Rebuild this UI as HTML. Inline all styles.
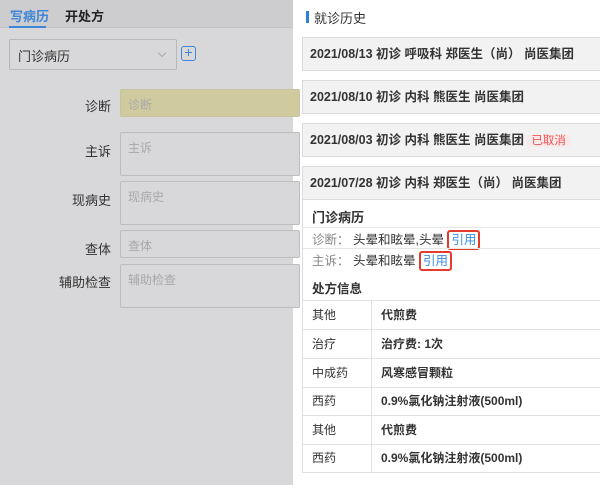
<!DOCTYPE html>
<html><head><meta charset="utf-8"><style>
*{margin:0;padding:0;box-sizing:border-box}
body{width:600px;height:485px;overflow:hidden;font-family:"Liberation Sans","Noto Sans CJK SC",sans-serif;background:#fff;position:relative}
.a{position:absolute}
#left{left:0;top:0;width:293px;height:485px;background:#d8d8da}
#tabs{left:0;top:0;width:293px;height:28px;background:#cdcdcf;border-bottom:1px solid #c4c4c6}
.lab{position:absolute;font-size:13px;color:#333;text-align:right;width:100px;left:11px}
.inp{position:absolute;left:120px;width:180px;border:1px solid #bdbdbf;border-radius:2px;background:#d8d8da;font-size:12px;color:#a8a8aa;padding:6px 0 0 7px}
.card{position:absolute;left:302px;width:300px;border:1px solid #dcdcdc;background:#f2f2f2;font-size:12.5px;font-weight:bold;color:#333;padding-left:7px;line-height:33px}
.row{position:absolute;left:303px;width:297px;font-size:12.5px;color:#333}
.tr{position:absolute;left:302px;width:300px;height:29px;border:1px solid #e2e2e2;border-top:none;font-size:12px;color:#333;line-height:28px}
.tr span{position:absolute;left:0;width:69px;padding-left:9px;border-right:1px solid #e2e2e2;height:28px}
.tr b{position:absolute;left:78px}
.q{color:#3a8ee6;border:2px solid #e53b2c;border-radius:3px;padding:0 2px;line-height:16px;display:inline-block}
</style></head><body>
<div id="left" class="a"></div>
<div id="tabs" class="a"></div>
<div class="a" style="left:10px;top:6px;font-size:13px;color:#3f85d8;font-weight:bold">写病历</div>
<div class="a" style="left:9px;top:26px;width:37px;height:2px;background:#3f85d8"></div>
<div class="a" style="left:65px;top:6px;font-size:13px;color:#222;font-weight:bold">开处方</div>
<div class="a" style="left:9px;top:39px;width:168px;height:31px;border:1px solid #b8b8ba;border-radius:2px;font-size:13px;color:#333;padding:6px 0 0 8px">门诊病历</div>
<div class="a" style="left:159px;top:50px;width:6px;height:6px;border-right:1px solid #aaa;border-bottom:1px solid #aaa;transform:rotate(45deg)"></div>
<div class="a" style="left:181px;top:46px;width:15px;height:15px;border:1.5px solid #3f85d8;border-radius:3px;color:#3f85d8;font-size:14px;line-height:11px;text-align:center">+</div>
<div class="lab" style="top:96px">诊断</div>
<div class="inp" style="top:89px;height:28px;background:#d0cb9f;border-color:#c8c3a0">诊断</div>
<div class="lab" style="top:141px">主诉</div>
<div class="inp" style="top:132px;height:44px">主诉</div>
<div class="lab" style="top:190px">现病史</div>
<div class="inp" style="top:181px;height:44px">现病史</div>
<div class="lab" style="top:239px">查体</div>
<div class="inp" style="top:230px;height:28px">查体</div>
<div class="lab" style="top:272px">辅助检查</div>
<div class="inp" style="top:264px;height:44px">辅助检查</div>

<div class="a" style="left:306px;top:11px;width:3px;height:12px;background:#2f7ee0"></div>
<div class="a" style="left:314px;top:8px;font-size:13px;color:#333">就诊历史</div>
<div class="card" style="top:37px;height:34px">2021/08/13 初诊 呼吸科 郑医生（尚） 尚医集团</div>
<div class="card" style="top:80px;height:34px">2021/08/10 初诊 内科 熊医生 尚医集团</div>
<div class="card" style="top:123px;height:34px">2021/08/03 初诊 内科 熊医生 尚医集团 <span style="font-weight:normal;color:#e55;background:#fbeaea;padding:0 4px;font-size:11.5px">已取消</span></div>
<div class="card" style="top:166px;height:34px">2021/07/28 初诊 内科 郑医生（尚） 尚医集团</div>
<div class="a" style="left:302px;top:199px;width:300px;height:272px;border:1px solid #dcdcdc;border-top:none;border-bottom:none"></div>
<div class="row" style="top:207px;left:312px;font-size:13px;font-weight:bold">门诊病历</div>
<div class="a" style="left:303px;top:227px;width:297px;height:1px;background:#e6e6e6"></div>
<div class="row" style="top:229px;left:312px"><span style="color:#888">诊断：</span> 头晕和眩晕,头晕 <span class="q">引用</span></div>
<div class="a" style="left:303px;top:248px;width:297px;height:1px;background:#e6e6e6"></div>
<div class="row" style="top:250px;left:312px"><span style="color:#888">主诉：</span> 头晕和眩晕 <span class="q">引用</span></div>
<div class="row" style="top:278px;left:312px;font-weight:bold">处方信息</div>
<div class="a" style="left:302px;top:300px;width:300px;height:1px;background:#e2e2e2"></div>
<div class="tr" style="top:301px"><span>其他</span><b>代煎费</b></div>
<div class="tr" style="top:330px"><span>治疗</span><b>治疗费: 1次</b></div>
<div class="tr" style="top:359px"><span>中成药</span><b>风寒感冒颗粒</b></div>
<div class="tr" style="top:387px"><span>西药</span><b>0.9%氯化钠注射液(500ml)</b></div>
<div class="tr" style="top:416px"><span>其他</span><b>代煎费</b></div>
<div class="tr" style="top:444px"><span>西药</span><b>0.9%氯化钠注射液(500ml)</b></div>
</body></html>
